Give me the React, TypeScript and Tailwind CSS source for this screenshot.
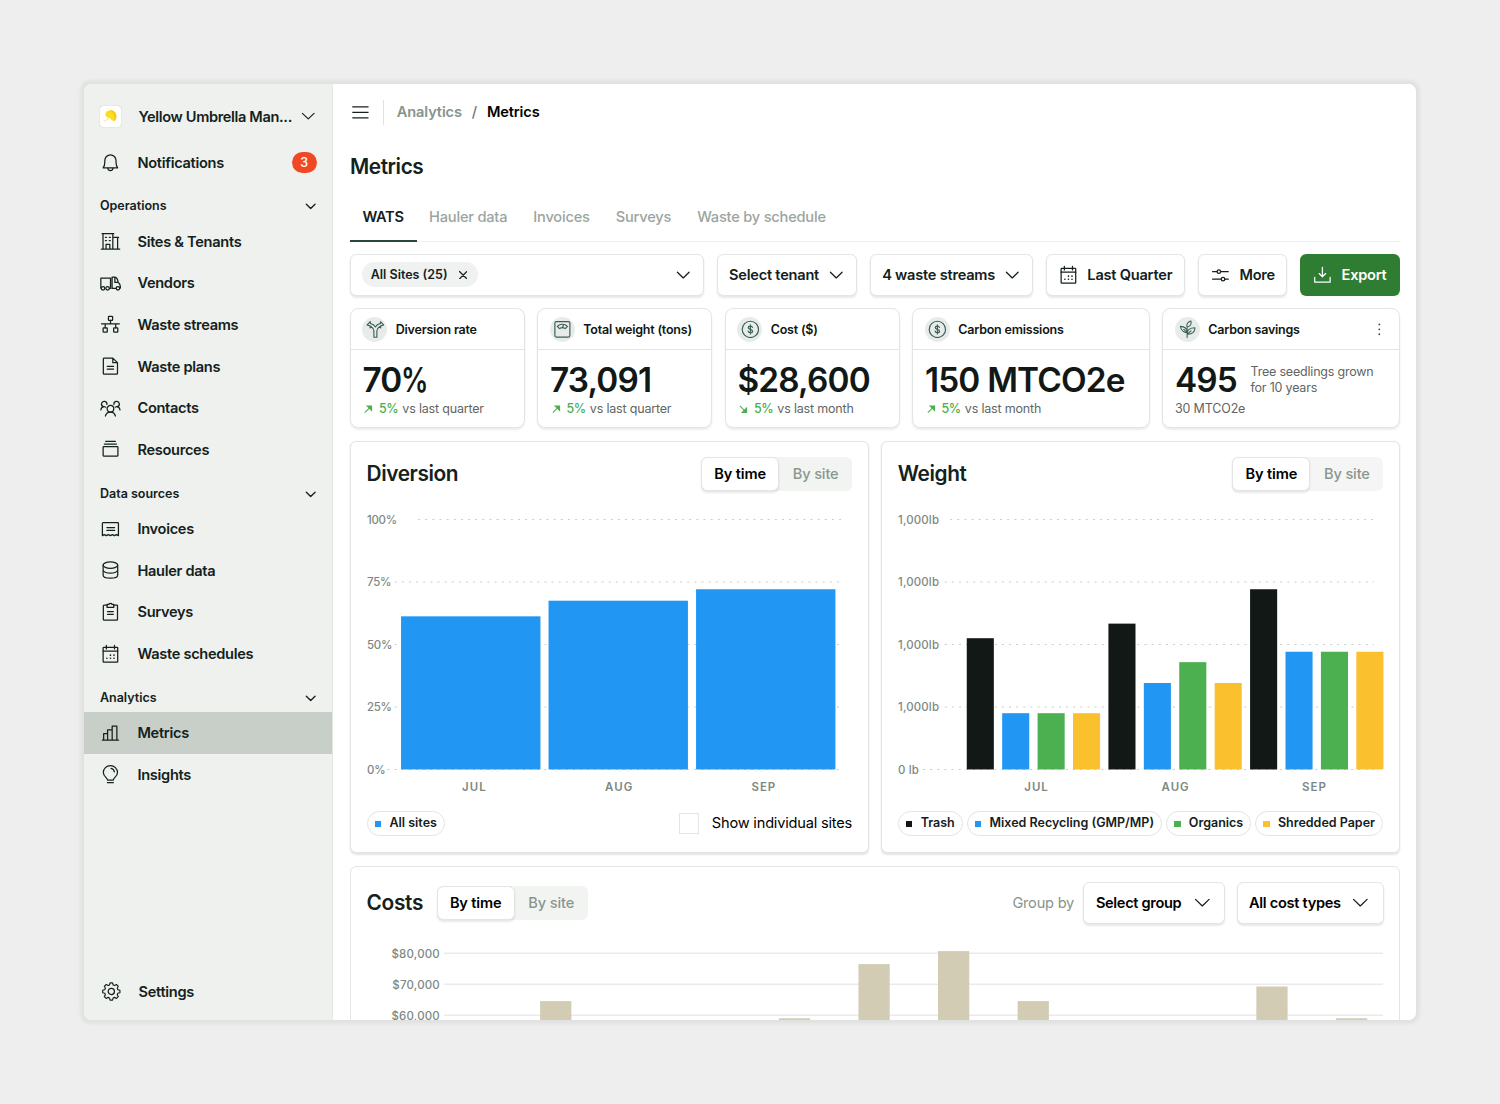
import type { ReactNode } from 'react';

const INK = '#14211c';

/* ---------- icons ---------- */

function Icon({ children, size = 20, color = INK, width = 1.2 }: { children: ReactNode; size?: number; color?: string; width?: number }) {
  return (
    <svg
      width={size}
      height={size}
      viewBox="0 0 20 20"
      fill="none"
      stroke={color}
      strokeWidth={width}
      strokeLinecap="round"
      strokeLinejoin="round"
      className="shrink-0"
    >
      {children}
    </svg>
  );
}

const BellIcon = () => (
  <Icon>
    <path d="M3 15.2h14c-1.3-1.5-1.6-3-1.6-5V8.300a5.400 5.600 0 0 0-10.800 0v1.900c0 2-.3 3.500-1.600 5zM7.500 15.400a2.500 2.400 0 0 0 5 0" />
  </Icon>
);

const BuildingIcon = () => (
  <Icon>
    <path d="M1.300 17.500h17.600M2.900 17.500V2.700M12.300 17.500V2.700M2 2.600h11.200M12.500 6.200h5.300M16.900 6.200v11.300M5.800 17.300v-4.500h3.600v4.500" />
    <path d="M5.200 6.100h1M8.900 6.100h1M5.200 9.200h1M8.900 9.200h1" />
  </Icon>
);

const TruckIcon = () => (
  <Icon>
    <path d="M.8 14.500V5h9.300v8.700M11.600 14.600V3.900h2.200c2 0 3.300 2 3.600 5.200 1.500.7 2.200 2 2.200 5.400M14.300 4.200v4.900h3" />
    <circle cx="2.900" cy="14.700" r="1.700" />
    <circle cx="7.300" cy="14.700" r="1.700" />
    <circle cx="17.200" cy="14.700" r="1.700" />
    <path d="M11.600 14.700h3.800M9.100 14.700h1" />
  </Icon>
);

const StreamsIcon = () => (
  <Icon>
    <rect x="8.100" y="2.300" width="4" height="3.900" rx=".6" />
    <path d="M10.100 6.200v3.200M1.400 9.400h17.200M5 9.400v4M15.100 9.400v4" />
    <rect x="3" y="13.400" width="4" height="4" rx=".6" />
    <rect x="13.100" y="13.400" width="4" height="4" rx=".6" />
  </Icon>
);

const DocIcon = () => (
  <Icon>
    <path d="M12.300 2H3.900a.7.7 0 0 0-.7.700v14.100c0 .4.300.7.700.7h12.200c.4 0 .7-.3.700-.7V6.400zM12.300 2v4.400h4.400M7 10h6M7 12.700h6" />
  </Icon>
);

const PeopleIcon = () => (
  <Icon>
    <circle cx="10" cy="10.400" r="3.200" />
    <path d="M5.200 17.300c.6-2.400 2.400-3.700 4.800-3.700s4.200 1.300 4.800 3.700" />
    <path d="M6.600 6.200A2.600 2.600 0 1 0 3.300 8.300M13.400 6.200a2.600 2.600 0 1 1 3.300 2.100" />
    <path d="M.8 11.300c.3-1.700 1.200-2.800 3-3M19.200 11.300c-.3-1.700-1.200-2.800-3-3M4.400 8.400l1 .3M15.600 8.400l-1 .3" />
  </Icon>
);

const StackIcon = () => (
  <Icon>
    <path d="M5.500 2.400h9.200M4.200 4.900h11.600" />
    <rect x="3" y="7.400" width="14.200" height="9" rx=".5" />
  </Icon>
);

const InvoiceIcon = () => (
  <Icon>
    <path d="M2.300 16V4.200c0-.4.300-.7.700-.7h14c.4 0 .7.300.7.700V16l-1.900-1-1.950 1-1.950-1-1.950 1-1.950-1-1.950 1-1.950-1zM6.600 8.200H14M6.600 11H14" />
  </Icon>
);

const DatabaseIcon = () => (
  <Icon>
    <ellipse cx="10" cy="4.900" rx="7" ry="3.100" />
    <path d="M3 4.900v9.500c0 1.800 3.100 3.100 7 3.100s7-1.300 7-3.100V4.900M3 9.600c0 1.700 3.100 3.100 7 3.100s7-1.400 7-3.100" />
  </Icon>
);

const ClipboardIcon = () => (
  <Icon>
    <path d="M6.800 3H3.900a.7.7 0 0 0-.7.700v13c0 .4.300.7.700.7h12.200c.4 0 .7-.3.700-.7v-13a.7.7 0 0 0-.7-.7h-2.900" />
    <path d="M6.800 2.400h1.700c.2-.6.700-1 1.500-1s1.300.4 1.500 1h1.700v2.800H6.800zM7.200 9.200h5.600M7.200 11.800h5.600" />
  </Icon>
);

const CalendarIcon = () => (
  <Icon>
    <rect x="3" y="3.200" width="14" height="14.200" rx=".6" />
    <path d="M3 6.900h14M6.100 1.400v3.400M13.900 1.400v3.400" />
    <path d="M10 10.700h.1M13.400 10.700h.1M6.600 13.700h.1M10 13.700h.1M13.400 13.700h.1" strokeWidth="1.500" />
  </Icon>
);

const BarsIcon = () => (
  <Icon>
    <path d="M2.200 16.400h15.600M3.500 16.400V10.300h3.800M7.300 16.400V6.700h4.400M11.700 16.400V3h4.500v13.400" />
  </Icon>
);

const BulbIcon = () => (
  <Icon>
    <path d="M7.200 15.400c0-2.200-4-3.300-4-7.300a6.800 6.600 0 0 1 13.600 0c0 4-4 5.100-4 7.300zM7.200 18h5.600M10.600 4.300c1.700.3 2.900 1.500 3.200 3.200" />
  </Icon>
);

const GearIcon = () => (
  <Icon>
    <path d="M8.700 1.800h2.600l.6 2.200 1.400.6 2-1.100 1.900 1.900-1.100 2 .6 1.400 2.200.6v2.600l-2.200.6-.6 1.400 1.100 2-1.900 1.900-2-1.100-1.400.6-.6 2.200H8.700l-.6-2.200-1.400-.6-2 1.100-1.900-1.900 1.100-2-.6-1.400-2.200-.6V9.400l2.200-.6.6-1.400-1.100-2 1.900-1.900 2 1.100 1.400-.6z" transform="translate(.6 .1) scale(.93)" />
    <circle cx="9.900" cy="10" r="3" />
  </Icon>
);

const SlidersIcon = () => (
  <Icon>
    <path d="M2.500 6.400h4.300M10.200 6.400h7.300M2.500 13.600h8.300M14.200 13.600h3.300" />
    <circle cx="8.500" cy="6.400" r="1.700" />
    <circle cx="12.500" cy="13.600" r="1.700" />
  </Icon>
);

const DownloadIcon = () => (
  <Icon color="#ffffff">
    <path d="M10 2.200v9M6.900 8.200l3.100 3.100 3.100-3.100M2.600 11.900v4.600h14.800v-4.600" />
  </Icon>
);

const TEAL = '#3c5f56';

const ForkIcon = () => (
  <Icon size={18} color={TEAL} width={1.2}>
    <path d="M8.400 18.400V11.500c0-1.900-1.200-3.400-2.800-4.400l-1.200 1.300V6.300L1 5.400 4.600 1.800v2c2.600.6 4.500 1.900 5.400 3.600.9-1.700 2.800-3 5.400-3.600v-2L19 5.400l-3.400.9v2.100l-1.200-1.300c-1.600 1-2.800 2.500-2.800 4.400v6.900z" />
  </Icon>
);

const ScaleIcon = () => (
  <Icon size={18} color={TEAL} width={1.25}>
    <rect x="2" y="1.800" width="16" height="16.400" rx="1.600" />
    <path d="M4.600 6.800c2.800-3 8-3 10.800 0L13 9.200c-1.700-1.300-4.300-1.300-6 0zM10 8l1-2" />
  </Icon>
);

const DollarIcon = () => (
  <Icon size={18} color={TEAL} width={1.25}>
    <circle cx="10" cy="10" r="8.700" />
    <path d="M12.200 8c-.2-1-1-1.500-2.200-1.500S7.800 7.100 7.800 8.200c0 2.400 4.500 1.200 4.500 3.700 0 1-.9 1.700-2.300 1.700s-2.300-.7-2.400-1.700M10 5.200v9.600" />
  </Icon>
);

const SeedlingIcon = () => (
  <Icon size={18} color={TEAL} width={1.1}>
    <path d="M9.700 18.800V9.500M9.700 15.200c0-4.400 2.600-6.900 8.400-6.900 0 4.400-2.700 7.300-8.400 6.900zM9.700 15.200l4.300-3.700M9.700 13.500C5.600 13.300 3.300 11 2.500 6.800 7 7 9.700 9.300 9.700 13.500zM9.700 13.500L6.200 10M9.700 7.500C9 4.600 10.200 2.100 13.800 1c.7 3.300-.6 6.200-4.100 6.500zM9.700 9.500v-2" />
  </Icon>
);

const Chevron = ({ w = 12, color = INK, stroke = 1.25 }: { w?: number; color?: string; stroke?: number }) => (
  <svg width={w} height={w / 2} viewBox="0 0 12 6" fill="none" stroke={color} strokeWidth={stroke * (12 / w)} strokeLinecap="round" strokeLinejoin="round" className="shrink-0 overflow-visible">
    <path d="M.4 .3L6 5.700 11.600 .3" />
  </svg>
);

const Trend = ({ down = false }: { down?: boolean }) => (
  <svg width="12" height="12" viewBox="0 0 12 12" className="shrink-0" fill="#4caf50">
    <g transform={down ? 'matrix(1 0 0 -1 0 12)' : undefined}>
      <path d="M3.700 2.400H9.700V8.400z" />
      <path d="M2.700 9.300L8 4" stroke="#4caf50" strokeWidth="1" />
    </g>
  </svg>
);

const Umbrella = () => (
  <svg width="16" height="16" viewBox="0 0 16 16" fill="none">
    <path d="M4 4.200C6 1.600 10.200 1.500 12.200 4c2.200 2.600 2 6.600-.4 8.400-1 .4-1.500-.4-2.200-.9-1-.3-1.300-1.200-2-2-1-.3-2.400 0-2.900-.9-1-.5-2.300-2-.7-4.400z" fill="#fbdc1f" />
    <path d="M7 2.800c3.400-.2 5.600 4.300 4.900 9.500 2.500-1.700 2.700-5.800.5-8.300C11 2.400 9 1.900 7 2.800z" fill="#f7c713" />
    <path d="M8 8.600l-4.500 3.600c-.6.500-1.300.3-1.500-.3" stroke="#f3d774" strokeWidth=".8" />
  </svg>
);

/* ---------- sidebar ---------- */

function NavItem({ icon, label, active = false, badge }: { icon: ReactNode; label: string; active?: boolean; badge?: number }) {
  return (
    <a className={`flex h-10 items-center gap-4 px-[15px] ${active ? 'bg-[#c8cfc9]' : ''}`}>
      {icon}
      <span className="flex-1 pt-px text-sm font-semibold tracking-[-0.02em]">{label}</span>
      {badge !== undefined && (
        <span className="flex h-5 w-6 items-center justify-center rounded-full bg-[#f04824] pt-px text-xs font-medium text-white">{badge}</span>
      )}
    </a>
  );
}

function NavHeader({ label }: { label: string }) {
  return (
    <div className="flex h-9 items-center justify-between pt-[9px] pr-4 pl-[15px]">
      <span className="text-xs font-semibold">{label}</span>
      <Chevron w={9} stroke={1.300} />
    </div>
  );
}

function Sidebar() {
  return (
    <aside className="flex w-[239px] shrink-0 flex-col border-r border-[#e3e7e4] bg-[#eef1ee] pt-[11px] pb-[7px]">
      <div className="mb-1 flex h-10 items-center pr-[17px] pl-[15px]">
        <span className="flex size-5 items-center justify-center rounded-[3px] bg-white shadow-[0_0_1px_rgba(0,0,0,0.3)]">
          <Umbrella />
        </span>
        <span className="ml-[17px] flex-1 pt-px text-sm font-semibold tracking-[-0.024em] whitespace-nowrap">Yellow Umbrella Man...</span>
        <Chevron w={12} stroke={1.100} />
      </div>
      <NavItem icon={<BellIcon />} label="Notifications" badge={3} />
      <NavHeader label="Operations" />
      <NavItem icon={<BuildingIcon />} label="Sites & Tenants" />
      <NavItem icon={<TruckIcon />} label="Vendors" />
      <NavItem icon={<StreamsIcon />} label="Waste streams" />
      <NavItem icon={<DocIcon />} label="Waste plans" />
      <NavItem icon={<PeopleIcon />} label="Contacts" />
      <NavItem icon={<StackIcon />} label="Resources" />
      <NavHeader label="Data sources" />
      <NavItem icon={<InvoiceIcon />} label="Invoices" />
      <NavItem icon={<DatabaseIcon />} label="Hauler data" />
      <NavItem icon={<ClipboardIcon />} label="Surveys" />
      <NavItem icon={<CalendarIcon />} label="Waste schedules" />
      <NavHeader label="Analytics" />
      <NavItem icon={<BarsIcon />} label="Metrics" active />
      <NavItem icon={<BulbIcon />} label="Insights" />
      <div className="mt-auto pl-px">
        <NavItem icon={<GearIcon />} label="Settings" />
      </div>
    </aside>
  );
}

/* ---------- main ---------- */

const box = 'rounded-md border border-[#e2e5e3] bg-white shadow-[0_1px_2px_rgba(16,33,26,0.1)]';

function Toggle({ tint = 'bg-[#f2f4f2]' }: { tint?: string }) {
  return (
    <div className={`flex h-8 rounded-md text-sm font-semibold tracking-[-0.01em] ${tint}`}>
      <button className={`w-[75px] pt-px ${box} text-black`}>By time</button>
      <button className="w-[70px] pt-px font-medium text-[#8a9690]">By site</button>
    </div>
  );
}

function StatCard({ icon, title, width, menu = false, children }: { icon: ReactNode; title: string; width: string; menu?: boolean; children: ReactNode }) {
  return (
    <section className={`${width} h-[115px] rounded-lg border border-[#e2e5e3] bg-white shadow-[0_1px_2px_rgba(16,33,26,0.08)]`}>
      <header className="flex h-[39px] items-center gap-2 border-b border-[#e2e5e3] px-[11px]">
        <span className="flex size-6 items-center justify-center rounded-full bg-[#e7eceb]">{icon}</span>
        <h3 className="flex-1 pt-[2px] text-xs font-semibold tracking-[-0.017em] whitespace-nowrap text-[#101614]">{title}</h3>
        {menu && (
          <svg width="16" height="16" viewBox="0 0 16 16" fill="#3f4a45">
            <circle cx="8" cy="3.300" r=".9" />
            <circle cx="8" cy="8" r=".9" />
            <circle cx="8" cy="12.700" r=".9" />
          </svg>
        )}
      </header>
      <div className="px-[11px] pt-3">{children}</div>
    </section>
  );
}

function Stat({ value, unit, versus, down = false }: { value: string; unit?: string; versus: string; down?: boolean }) {
  return (
    <>
      <p className="text-[32px] leading-9 font-semibold tracking-[-0.024em] whitespace-nowrap text-[#111816]">
        {value}
        {unit && <span className="inline-block origin-left scale-x-[0.82]">{unit}</span>}
      </p>
      <p className="mt-px flex items-center text-xs tracking-[-0.015em] text-[#5f6663]">
        <Trend down={down} />
        <span className="mr-1 ml-1 font-medium tracking-[-0.04em] text-[#4caf50]">5%</span>
        {versus}
      </p>
    </>
  );
}

const AXIS = '#7d8883';

function Dots({ x1, x2, y }: { x1: number; x2: number; y: number }) {
  return <line x1={x1} x2={x2} y1={y} y2={y} stroke="#c9cfcc" strokeWidth="1" strokeDasharray="2 4.85" />;
}

const ROWS = [11, 71, 131, 191, 251];

function Months({ centers }: { centers: number[] }) {
  return (
    <>
      {['JUL', 'AUG', 'SEP'].map((m, i) => (
        <text key={m} x={centers[i]} y="271.500" fontSize="11" fontWeight="600" letterSpacing="1" fill={AXIS} textAnchor="middle">
          {m}
        </text>
      ))}
    </>
  );
}

function DiversionChart() {
  const labels = ['100%', '75%', '50%', '25%', '0%'];
  const starts = [49, 26.500, 26.500, 26.500, 19.500];
  const heights = [147, 162, 173];
  return (
    <svg width="466" height="280" viewBox="0 0 466 280" className="block">
      {ROWS.map((y, i) => (
        <g key={y}>
          <text x="0" y={y + 4} fontSize="11" fontWeight="500" letterSpacing="-.25" fill={AXIS}>{labels[i]}</text>
          <Dots x1={starts[i]} x2={457} y={y} />
        </g>
      ))}
      {heights.map((h, i) => (
        <rect key={h} x={32.700 + i * 141.600} y={251 - h} width="133.800" height={h} fill="#2196f3" />
      ))}
      <Months centers={[103.100, 242.100, 381]} />
    </svg>
  );
}

const STREAMS = [
  { name: 'Trash', color: '#111816' },
  { name: 'Mixed Recycling (GMP/MP)', color: '#2196f3' },
  { name: 'Organics', color: '#4caf50' },
  { name: 'Shredded Paper', color: '#fbc02d' },
];

function WeightChart() {
  const labels = ['1,000lb', '1,000lb', '1,000lb', '1,000lb', '0 lb'];
  const starts = [50, 38, 38, 38, 24];
  const heights = [126, 54, 54, 54, 140, 83, 103, 83, 173, 113, 113, 113];
  return (
    <svg width="467" height="280" viewBox="0 0 467 280" className="block">
      {ROWS.map((y, i) => (
        <g key={y}>
          <text x="0" y={y + 4} fontSize="11" fontWeight="500" letterSpacing=".15" fill={AXIS}>{labels[i]}</text>
          <Dots x1={starts[i]} x2={457} y={y} />
        </g>
      ))}
      {heights.map((h, i) => (
        <rect key={i} x={66 + i * 34} y={251 - h} width="26" height={h} fill={STREAMS[i % 4].color} />
      ))}
      <Months centers={[133, 266.500, 399.800]} />
    </svg>
  );
}

function CostChart() {
  const ticks = ['$80,000', '$70,000', '$60,000'];
  const bars = [
    { slot: 0, top: 50 },
    { slot: 3, top: 66.500 },
    { slot: 4, top: 14.500 },
    { slot: 5, top: 2 },
    { slot: 6, top: 50 },
    { slot: 9, top: 36 },
    { slot: 10, top: 66.500 },
  ];
  return (
    <svg width="976" height="140" viewBox="0 0 976 140" className="block overflow-visible">
      {ticks.map((t, i) => (
        <g key={t}>
          <text x="70" y={8.400 + i * 29.800} fontSize="11" fontWeight="500" letterSpacing=".2" fill={AXIS} textAnchor="end">{t}</text>
          <line x1="74" x2="975.500" y1={4 + i * 29.800} y2={4 + i * 29.800} stroke="#e9ebea" strokeWidth="1.400" />
        </g>
      ))}
      {bars.map((b) => (
        <rect key={b.slot} x={166.200 + b.slot * 76.400} y={b.top} width="30" height={140 - b.top} fill="#d2ccb5" />
      ))}
    </svg>
  );
}

function Pill({ color, name }: { color: string; name: string }) {
  return (
    <span className="flex h-6 items-center gap-2 rounded-full border border-[#e2e5e3] px-[7px] text-xs font-semibold whitespace-nowrap">
      <span className="size-1.5" style={{ backgroundColor: color }} />
      {name}
    </span>
  );
}

function Panel({ title, tint, children }: { title: string; tint?: string; children: ReactNode }) {
  return (
    <section className="h-[396px] w-[498px] rounded-md border border-[#e2e5e3] bg-white px-[15px] pt-[15px] shadow-[0_1px_2px_rgba(16,33,26,0.12)]">
      <header className="flex items-center justify-between">
        <h2 className="text-xl font-semibold tracking-[-0.02em]">{title}</h2>
        <Toggle tint={tint} />
      </header>
      <div className="pt-[17px]">{children}</div>
    </section>
  );
}

export default function App() {
  const tabs = ['Hauler data', 'Invoices', 'Surveys', 'Waste by schedule'];
  return (
    <div className="h-[1060px] w-[1440px] overflow-hidden bg-[#eeeeee] p-20 font-['Inter',sans-serif] text-[#14211c] [zoom:1.0416667]">
      <div className="flex h-[900px] w-[1280px] overflow-hidden rounded-lg border border-[#dfe2e0] bg-white shadow-[0_0_4px_1px_rgba(20,40,30,0.08)]">
        <Sidebar />
        <main className="flex-1 overflow-hidden pr-[15px] pl-4">
          <div className="-mt-px flex h-14 items-center text-sm font-semibold tracking-[-0.008em]">
            <svg width="20" height="20" viewBox="0 0 20 20" stroke={INK} strokeWidth="1.300">
              <path d="M2.200 4.700h15.600M2.200 10h15.600M2.200 15.300h15.600" />
            </svg>
            <span className="ml-3 h-6 w-px bg-[#dfe3e0]" />
            <span className="ml-3 text-[#87938d]">Analytics</span>
            <span className="mx-[9.5px] font-medium text-[#6d7873]">/</span>
            <span className="text-black">Metrics</span>
          </div>
          <h1 className="mt-2 text-xl leading-8 font-semibold tracking-[-0.02em]">Metrics</h1>
          <nav className="mt-3 flex h-11 border-b border-[#eff1ef] text-sm font-medium tracking-[-0.013em] text-[#9aa5a0]">
            <a className="-mb-px h-11 w-16 border-b-2 border-[#24493c] px-3 pt-[11px] font-semibold tracking-[-0.02em] text-[#14211c]">WATS</a>
            {tabs.map((t) => (
              <a key={t} className="mr-px px-3 pt-[11px]">{t}</a>
            ))}
          </nav>

          <div className="mt-3 flex gap-3 text-sm font-semibold tracking-[-0.015em] whitespace-nowrap">
            <div className={`flex h-10 w-[340px] items-center justify-between pr-[13px] pl-[11px] ${box}`}>
              <span className="flex h-6 items-center gap-[11px] rounded-full bg-[#eff2f0] pr-[10px] pl-2 text-xs tracking-normal">
                All Sites (25)
                <svg width="8" height="8" viewBox="0 0 8 8" stroke={INK} strokeWidth="1.200" strokeLinecap="round">
                  <path d="M.3 .3l7.400 7.400M7.700 .3L.3 7.700" />
                </svg>
              </span>
              <Chevron />
            </div>
            <button className={`flex h-10 w-[135px] items-center justify-between pr-[13px] pl-[11px] ${box}`}>
              Select tenant <Chevron />
            </button>
            <button className={`flex h-10 w-[157px] items-center justify-between pr-[13px] pl-[11px] ${box}`}>
              4 waste streams <Chevron />
            </button>
            <button className={`flex h-10 w-[134px] items-center gap-2 pl-[11px] ${box}`}>
              <CalendarIcon /> Last Quarter
            </button>
            <button className={`flex h-10 w-[86px] items-center gap-2 pl-[11px] ${box}`}>
              <SlidersIcon /> More
            </button>
            <button className="flex h-10 w-24 items-center gap-2 rounded-md bg-[#2e7d32] pl-3 text-white">
              <DownloadIcon /> Export
            </button>
          </div>

          <div className="mt-3 flex gap-3">
            <StatCard width="w-[168px]" icon={<ForkIcon />} title="Diversion rate">
              <Stat value="70" unit="%" versus="vs last quarter" />
            </StatCard>
            <StatCard width="w-[168px]" icon={<ScaleIcon />} title="Total weight (tons)">
              <Stat value="73,091" versus="vs last quarter" />
            </StatCard>
            <StatCard width="w-[168px]" icon={<DollarIcon />} title="Cost ($)">
              <Stat value="$28,600" versus="vs last month" down />
            </StatCard>
            <StatCard width="w-[228px]" icon={<DollarIcon />} title="Carbon emissions">
              <Stat value="150 MTCO2e" versus="vs last month" />
            </StatCard>
            <StatCard width="w-[228px]" icon={<SeedlingIcon />} title="Carbon savings" menu>
              <div className="flex items-start gap-[13px]">
                <p className="text-[32px] leading-9 font-semibold tracking-[-0.024em] text-[#111816]">495</p>
                <p className="pt-[2px] text-xs leading-[15px] tracking-[-0.016em] whitespace-nowrap text-[#5f6663]">
                  Tree seedlings grown
                  <br />
                  for 10 years
                </p>
              </div>
              <p className="mt-px text-xs tracking-[-0.012em] text-[#5f6663]">30 MTCO2e</p>
            </StatCard>
          </div>

          <div className="mt-3 flex gap-3">
            <Panel title="Diversion">
              <DiversionChart />
              <div className="mt-[11px] flex items-center justify-between">
                <Pill color="#2196f3" name="All sites" />
                <label className="flex items-center gap-3 text-sm font-normal tracking-[-0.013em] text-black">
                  <span className="size-5 border border-[#e2e5e3] bg-white" />
                  Show individual sites
                </label>
              </div>
            </Panel>
            <Panel title="Weight" tint="bg-[#f5f5f5]">
              <WeightChart />
              <div className="mt-[11px] flex justify-between">
                {STREAMS.map((s) => (
                  <Pill key={s.name} color={s.color} name={s.name} />
                ))}
              </div>
            </Panel>
          </div>

          <section className="mt-3 h-[240px] rounded-md border border-[#e2e5e3] bg-white px-[15px] pt-[15px]">
            <header className="-mr-px flex h-10 items-center">
              <h2 className="mr-[13px] text-xl font-semibold tracking-[-0.015em]">Costs</h2>
              <Toggle />
              <span className="mr-[9px] ml-auto pt-px text-sm tracking-[-0.015em] text-[#87938d]">Group by</span>
              <button className={`mr-[11px] flex h-10 w-[136px] items-center justify-between pr-[14px] pl-[11px] text-sm font-semibold tracking-[-0.022em] text-black ${box}`}>
                Select group <Chevron w={14} />
              </button>
              <button className={`flex h-10 w-[142px] items-center justify-between pr-[15px] pl-[11px] text-sm font-semibold tracking-[-0.02em] text-black ${box}`}>
                All cost types <Chevron w={14} />
              </button>
            </header>
            <div className="pt-6">
              <CostChart />
            </div>
          </section>
        </main>
      </div>
    </div>
  );
}
